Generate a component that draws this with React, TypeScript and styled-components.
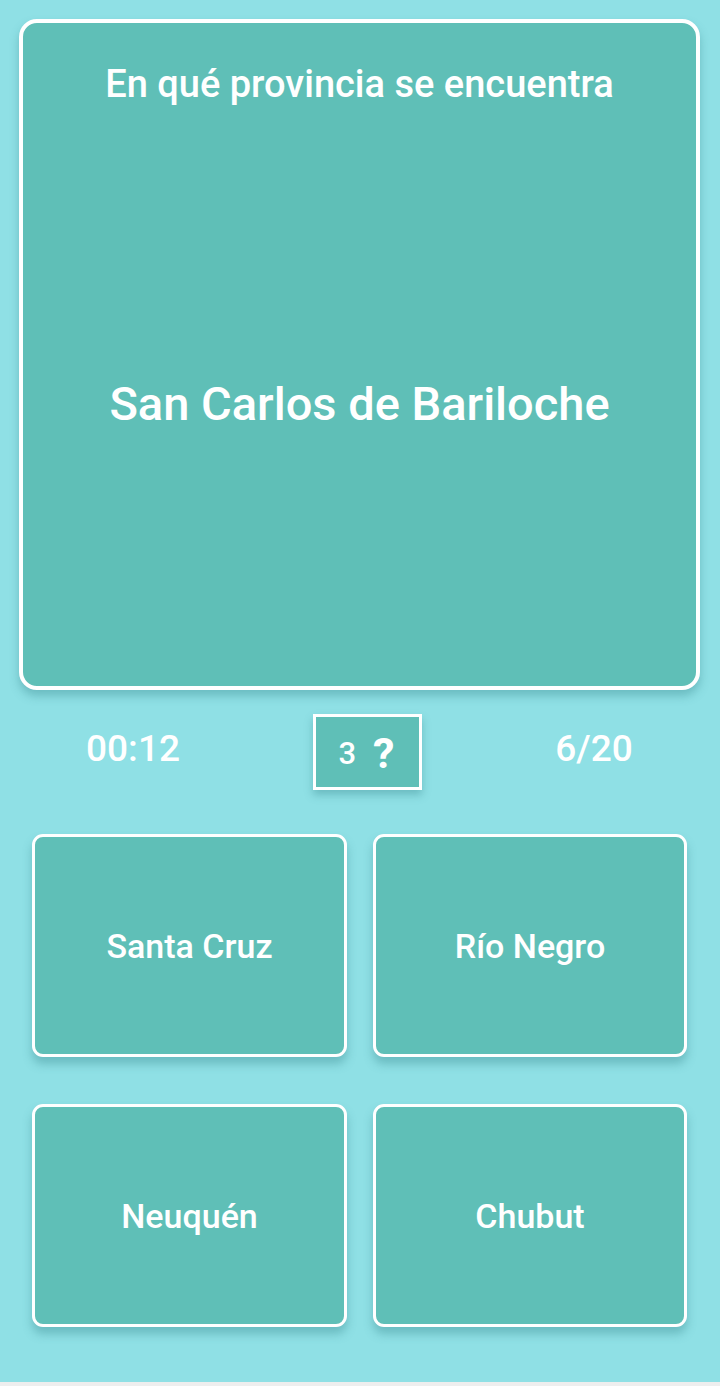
import React from "react";
import styled, { createGlobalStyle } from "styled-components";

const Global = createGlobalStyle`
  html, body { margin: 0; padding: 0; background: #eeeeee; }
  body { font-family: Roboto, "Noto Sans", sans-serif; }
`;

const Screen = styled.div`
  width: 720px;
  height: 1382px;
  background: #8fe0e5;
  box-sizing: border-box;
  padding-top: 19px;
  display: flex;
  flex-direction: column;
  overflow: hidden;
`;

const QuestionCard = styled.section`
  margin-left: 19px;
  width: 681px;
  height: 671px;
  flex-shrink: 0;
  box-sizing: border-box;
  border: 4px solid #ffffff;
  border-radius: 18px;
  background: #5fbfb7;
  box-shadow: 0 6px 10px rgba(40, 120, 125, 0.35);
  display: flex;
  flex-direction: column;
  align-items: center;
  color: #ffffff;
`;

const Prompt = styled.div`
  margin-top: 39px;
  font-size: 38px;
  font-weight: 500;
  line-height: 44px;
  white-space: nowrap;
`;

const Place = styled.div`
  margin-top: 270px;
  font-size: 47px;
  font-weight: 500;
  line-height: 55px;
  white-space: nowrap;
`;

const StatusRow = styled.div`
  display: flex;
  height: 144px;
  flex-shrink: 0;
  align-items: center;
  color: #ffffff;
  font-weight: 500;
`;

const StatusCell = styled.div<{ $w: number }>`
  width: ${(p) => p.$w}px;
  display: flex;
  justify-content: center;
  align-items: center;
`;

const StatusText = styled.span`
  font-size: 37px;
  line-height: 1;
  margin-top: -28px;
`;

const HintBox = styled.button`
  width: 109px;
  height: 76px;
  box-sizing: border-box;
  border: 3px solid #ffffff;
  border-radius: 0;
  background: #5fbfb7;
  color: #ffffff;
  font-family: inherit;
  display: flex;
  align-items: center;
  justify-content: center;
  gap: 17px;
  padding: 0 2px 0 0;
  box-shadow: 0 5px 8px rgba(40, 120, 125, 0.35);
  margin-top: -20px;
`;

const HintCount = styled.span`
  font-size: 31px;
  font-weight: 500;
  line-height: 1;
  margin-top: 2px;
`;

const HintMark = styled.span`
  font-size: 43px;
  font-weight: 700;
  line-height: 1;
  margin-top: 2px;
`;

const Answers = styled.div`
  display: grid;
  grid-template-columns: 315px 314px;
  grid-auto-rows: 223px;
  column-gap: 26px;
  row-gap: 47px;
  padding-left: 32px;
`;

const AnswerButton = styled.button`
  box-sizing: border-box;
  border: 3px solid #ffffff;
  border-radius: 11px;
  background: #5fbfb7;
  color: #ffffff;
  font-family: Roboto, "Noto Sans", sans-serif;
  font-size: 34px;
  font-weight: 500;
  box-shadow: 0 7px 10px rgba(40, 120, 125, 0.35);
  display: flex;
  align-items: center;
  justify-content: center;
  padding: 0;
`;

const answers = ["Santa Cruz", "Río Negro", "Neuquén", "Chubut"];

export default function App() {
  return (
    <>
      <Global />
      <Screen>
        <QuestionCard>
          <Prompt>En qué provincia se encuentra</Prompt>
          <Place>San Carlos de Bariloche</Place>
        </QuestionCard>
        <StatusRow>
          <StatusCell $w={266}>
            <StatusText>00:12</StatusText>
          </StatusCell>
          <StatusCell $w={203}>
            <HintBox>
              <HintCount>3</HintCount>
              <HintMark>?</HintMark>
            </HintBox>
          </StatusCell>
          <StatusCell $w={250}>
            <StatusText>6/20</StatusText>
          </StatusCell>
        </StatusRow>
        <Answers>
          {answers.map((a) => (
            <AnswerButton key={a}>{a}</AnswerButton>
          ))}
        </Answers>
      </Screen>
    </>
  );
}
